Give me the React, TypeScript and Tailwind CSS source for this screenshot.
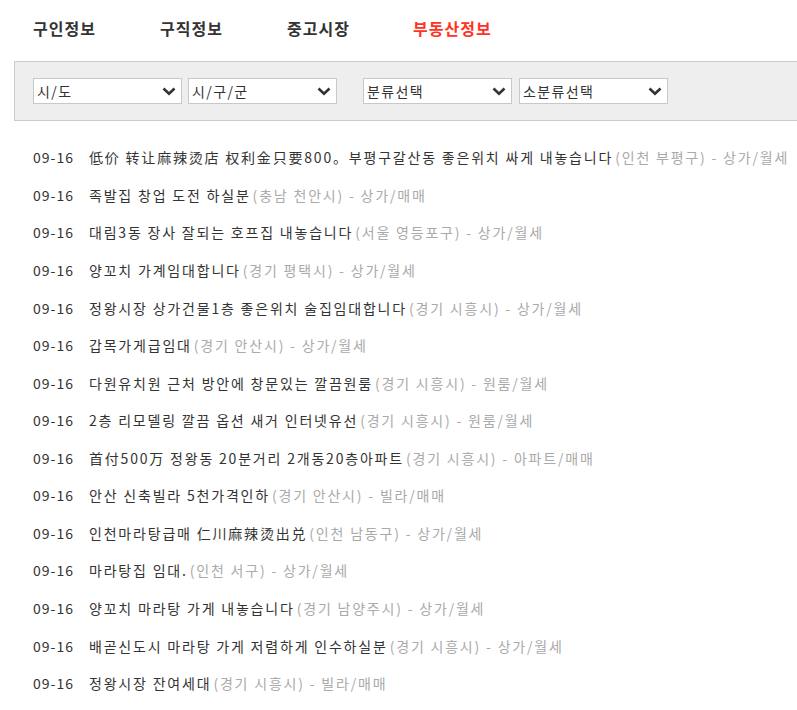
import React from "react";

const rows: [string, string, string][] = [
  ["低价 转让麻辣烫店 权利金只要800。부평구갈산동 좋은위치 싸게 내놓습니다", "인천 부평구", "상가/월세"],
  ["족발집 창업 도전 하실분", "충남 천안시", "상가/매매"],
  ["대림3동 장사 잘되는 호프집 내놓습니다", "서울 영등포구", "상가/월세"],
  ["양꼬치 가계임대합니다", "경기 평택시", "상가/월세"],
  ["정왕시장 상가건물1층 좋은위치 술집임대합니다", "경기 시흥시", "상가/월세"],
  ["갑목가게급임대", "경기 안산시", "상가/월세"],
  ["다원유치원 근처 방안에 창문있는 깔끔원룸", "경기 시흥시", "원룸/월세"],
  ["2층 리모델링 깔끔 옵션 새거 인터넷유선", "경기 시흥시", "원룸/월세"],
  ["首付500万 정왕동 20분거리 2개동20층아파트", "경기 시흥시", "아파트/매매"],
  ["안산 신축빌라 5천가격인하", "경기 안산시", "빌라/매매"],
  ["인천마라탕급매 仁川麻辣烫出兑", "인천 남동구", "상가/월세"],
  ["마라탕집 임대.", "인천 서구", "상가/월세"],
  ["양꼬치 마라탕 가게 내놓습니다", "경기 남양주시", "상가/월세"],
  ["배곧신도시 마라탕 가게 저렴하게 인수하실분", "경기 시흥시", "상가/월세"],
  ["정왕시장 잔여세대", "경기 시흥시", "빌라/매매"],
];

const Chevron = () => (
  <svg width="14" height="9" viewBox="0 0 14 9" className="shrink-0">
    <path d="M1.5 1.5 L7 6.8 L12.5 1.5" fill="none" stroke="#333" strokeWidth="2.6" />
  </svg>
);

const Select = ({ label, className = "" }: { label: string; className?: string }) => (
  <div
    className={`flex h-[26px] w-[149px] items-center justify-between border border-[#c8c8c8] bg-white pl-[3px] pr-[5px] text-[14px] tracking-[1.4px] text-[#333] ${className}`}
  >
    <span>{label}</span>
    <Chevron />
  </div>
);

export default function App() {
  const font = { fontFamily: '"Noto Sans CJK KR", "Noto Sans", sans-serif' };
  return (
    <div className="w-[797px] overflow-hidden bg-white pl-[14px]" style={font}>
      <div className="flex h-[61px] items-start pl-[19px] pt-[17px] text-[16px] font-bold tracking-[1px] text-[#333]">
        <span className="w-[127px] leading-[22px]">구인정보</span>
        <span className="w-[127px] leading-[22px]">구직정보</span>
        <span className="w-[126px] leading-[22px]">중고시장</span>
        <span className="leading-[22px] text-[#ff3322]">부동산정보</span>
      </div>
      <div className="flex h-[60px] w-[800px] items-center border border-r-0 border-[#cccccc] bg-[#eeeeee] pl-[18px]">
        <Select label="시/도" />
        <Select label="시/구/군" className="ml-[6px]" />
        <Select label="분류선택" className="ml-[26px]" />
        <Select label="소분류선택" className="ml-[7px]" />
      </div>
      <ul className="pt-[18px]">
        {rows.map(([t, loc, cat], i) => (
          <li key={i} className="flex h-[37.57px] items-center pl-[19px] text-[14px] whitespace-nowrap">
            <span className="w-[56px] shrink-0 tracking-[1px] text-[#333]">09-16</span>
            <span className="tracking-[1.8px] text-[#333]">{t}</span>
            <span className="ml-[2px] tracking-[1.8px] text-[#aaaaaa]">
              ({loc}) - {cat}
            </span>
          </li>
        ))}
      </ul>
    </div>
  );
}
